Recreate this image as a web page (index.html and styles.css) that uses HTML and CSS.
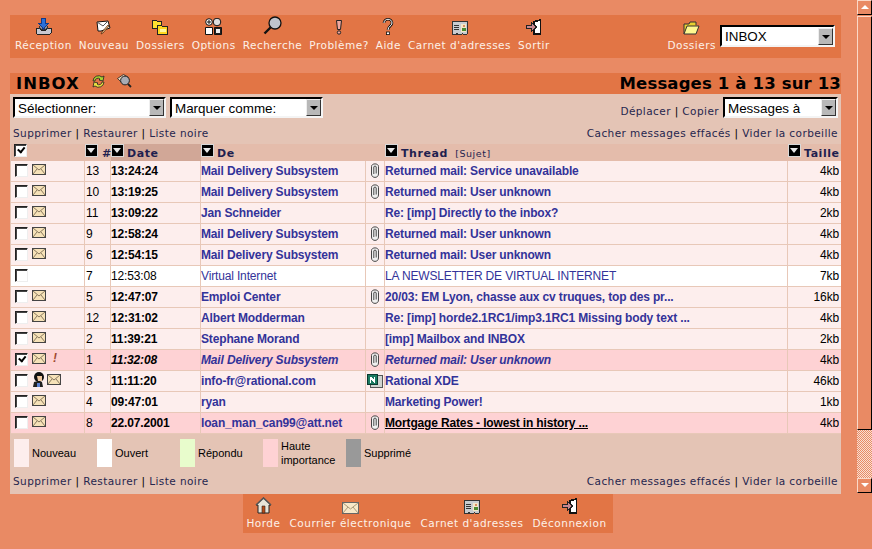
FILE: index.html
```html
<!DOCTYPE html>
<html lang="fr">
<head>
    <meta charset="UTF-8">
    <title>INBOX</title>
    <link rel="stylesheet" href="styles.css">
</head>
<body>
    <svg class="sprites" width="0" height="0">
        <symbol id="i-inbox" viewBox="0 0 17 17" shape-rendering="crispEdges">
            <path d="M1 10h3l2 2h5l2-2h3v5l-1 1H2l-1-1z" fill="#c8c8d0" stroke="#222"/>
            <path d="M4 10l2-4h5l2 4-2 1H6z" fill="#8a8a98" stroke="#333"/>
            <path d="M6.500 0h4v5h3l-5 6-5-6h3z" fill="#2a6fd8" stroke="#123a88"/>
        </symbol>
        <symbol id="i-new" viewBox="0 0 15 15">
            <path d="M1 2l11-1 2 7-9 3H2z" fill="#fff" stroke="#111"/>
            <path d="M1 2l6 4 5-5" fill="none" stroke="#555"/>
            <path d="M13 6l-6 7-2 1 1-2 6-7z" fill="#f0c890" stroke="#5a3010" stroke-width=".8"/>
        </symbol>
        <symbol id="i-folders" viewBox="0 0 16 15" shape-rendering="crispEdges">
            <path d="M.5.500h4l1 1h4v7h-9z" fill="#ffe030" stroke="#222"/>
            <path d="M5.500 5.500h4l1 1h5v8h-10z" fill="#ffd820" stroke="#222"/>
            <path d="M8 9h6v3H8z" fill="#fff6a0"/>
        </symbol>
        <symbol id="i-options" viewBox="0 0 17 17">
            <circle cx="4" cy="4" r="3.300" fill="#fff" stroke="#111"/>
            <path d="M2 4h4M4 2v4" stroke="#111"/>
            <circle cx="12" cy="4" r="3.800" fill="#ddd" stroke="#111"/>
            <path d="M.5 9.500h7v7h-7z" fill="#fff" stroke="#111"/>
            <path d="M9.500 9.500h7v7h-7z" fill="#222" stroke="#111"/>
            <path d="M11 11h4v4h-4z" fill="#eee"/>
        </symbol>
        <symbol id="i-search" viewBox="0 0 19 19">
            <circle cx="12" cy="7" r="6" fill="#c0c4cc" stroke="#111" stroke-width="1.300"/>
            <path d="M7.500 11.500L1.500 17.500" stroke="#111" stroke-width="2.400"/>
        </symbol>
        <symbol id="i-problem" viewBox="0 0 8 16">
            <path d="M1.500 1.500h5l-1 9h-3z" fill="#f0a8a0" stroke="#222"/>
            <circle cx="4" cy="13.500" r="1.700" fill="#f0a8a0" stroke="#222"/>
        </symbol>
        <symbol id="i-help" viewBox="0 0 12 17">
            <path d="M2 5c0-5 8-5 8 0 0 3-4 3-4 7" fill="none" stroke="#111" stroke-width="2.600"/>
            <path d="M2 5c0-5 8-5 8 0 0 3-4 3-4 7" fill="none" stroke="#fff" stroke-width="1"/>
            <rect x="4.500" y="14" width="3" height="2.600" fill="#fff" stroke="#111" stroke-width=".8"/>
        </symbol>
        <symbol id="i-book" viewBox="0 0 16 14" shape-rendering="crispEdges">
            <path d="M.5.500h15v12l-1 1h-3l-1-1-1 1H6l-1-1-1 1H1z" fill="#c8ccd0" stroke="#333"/>
            <path d="M2 4h5v1H2zM2 6h5v1H2zM2 8h5v1H2z" fill="#333"/>
            <path d="M9 3h5v8H9z" fill="#f4e8c8"/>
            <path d="M11 4h2v2h-2z" fill="#d89060"/>
            <path d="M10 7h4v3h-4z" fill="#4a8a30"/>
        </symbol>
        <symbol id="i-exit" viewBox="0 0 16 16" shape-rendering="crispEdges">
            <path d="M7 2l8-2v16H7z" fill="#111"/>
            <path d="M9 3l5-1v12H9z" fill="#fff"/>
            <path d="M.5 6.500h5v-3l5 4.500-5 4.500v-3h-5z" fill="#c88890" stroke="#222"/>
        </symbol>
        <symbol id="i-folder-open" viewBox="0 0 17 14">
            <path d="M1 13V3h5l1-2h6v3" fill="#e8d030" stroke="#333"/>
            <path d="M1 13l3-8h12l-3 8z" fill="#fff890" stroke="#333"/>
        </symbol>
        <symbol id="i-refresh" viewBox="0 0 15 15">
            <path d="M2 7a5.500 5.500 0 0 1 9-4l2-1-1 5-4-1 1-1a3 3 0 0 0-5 2z" fill="#a8d030" stroke="#222" stroke-width=".8"/>
            <path d="M13 8a5.500 5.500 0 0 1-9 4l-2 1 1-5 4 1-1 1a3 3 0 0 0 5-2z" fill="#e8e040" stroke="#222" stroke-width=".8"/>
        </symbol>
        <symbol id="i-find" viewBox="0 0 15 14">
            <path d="M.5 4.500l6-4 5 3-6 6z" fill="#ecd8bc" stroke="#222" stroke-width=".8"/>
            <circle cx="8" cy="6.500" r="4.400" fill="#a8acb4" stroke="#222"/>
            <path d="M11 10l3 3" stroke="#222" stroke-width="1.800"/>
        </symbol>
        <symbol id="i-mail" viewBox="0 0 14 11" shape-rendering="crispEdges">
            <path d="M1 .5h12l.5.500v9l-.5.500H1l-.5-.5V1z" fill="#f6e2b8" stroke="#444"/>
            <path d="M1 1l6 5 6-5M1 10l4-5M13 10L9 5" fill="none" stroke="#8a7a60" shape-rendering="auto"/>
        </symbol>
        <symbol id="i-clip" viewBox="0 0 10 15">
            <path d="M1.500 3.500C1.500 0 8.500 0 8.500 3.500v7.500c0 4.500-7 4.500-7 0z" fill="#f0f0f0" stroke="#333" stroke-width=".9"/>
            <path d="M3.800 11V4C3.800 2.800 6.200 2.800 6.200 4v6.500" fill="none" stroke="#333" stroke-width=".9"/>
        </symbol>
        <symbol id="i-person" viewBox="0 0 13 15">
            <path d="M1 15l1-5 4-1 4 1 1 5z" fill="#202020"/>
            <circle cx="7" cy="5" r="5" fill="#111"/>
            <path d="M5 4h5v5H6z" fill="#f0c8a0"/>
            <path d="M5 11h3v4H5z" fill="#5a80d0"/>
        </symbol>
        <symbol id="i-notes" viewBox="0 0 16 15" shape-rendering="crispEdges">
            <path d="M3.500 2.500h12v12h-12z" fill="#d0d4d0" stroke="#555"/>
            <path d="M.5 1.500h10v10H.5z" fill="#1a7a60" stroke="#0a3a30"/>
            <path d="M3 4h1l3 3V4h1v6H7L4 7v3H3z" fill="#fff"/>
        </symbol>
        <symbol id="i-home" viewBox="0 0 17 17">
            <path d="M8.500 1L1 8h2v8h11V8h2z" fill="#e8e4d8" stroke="#222"/>
            <path d="M1 8l7.500-7L16 8" fill="none" stroke="#555" stroke-width="1.600"/>
            <path d="M7 9h3v7H7z" fill="#b84a18" stroke="#222" stroke-width=".6"/>
        </symbol>
        <symbol id="i-bigmail" viewBox="0 0 17 12" shape-rendering="crispEdges">
            <path d="M.5.500h16v11H.5z" fill="#f8e8c8" stroke="#666"/>
            <path d="M1 1l7.500 6L16 1M1 11l5-6M16 11l-5-6" fill="none" stroke="#a89878" shape-rendering="auto"/>
        </symbol>
    </svg>

    <main class="page">
        <nav class="toolbar">
            <a class="tool"><svg class="icon" width="17" height="17"><use href="#i-inbox"/></svg>Réception</a>
            <a class="tool"><svg class="icon" width="15" height="15"><use href="#i-new"/></svg>Nouveau</a>
            <a class="tool"><svg class="icon" width="16" height="15"><use href="#i-folders"/></svg>Dossiers</a>
            <a class="tool"><svg class="icon" width="17" height="17"><use href="#i-options"/></svg>Options</a>
            <a class="tool"><svg class="icon" width="19" height="19"><use href="#i-search"/></svg>Recherche</a>
            <a class="tool"><svg class="icon" width="8" height="16"><use href="#i-problem"/></svg>Problème?</a>
            <a class="tool"><svg class="icon" width="12" height="17"><use href="#i-help"/></svg>Aide</a>
            <a class="tool"><svg class="icon" width="16" height="14"><use href="#i-book"/></svg>Carnet d'adresses</a>
            <a class="tool"><svg class="icon" width="16" height="16"><use href="#i-exit"/></svg>Sortir</a>
            <div class="folder-pick">
                <a class="tool"><svg class="icon" width="17" height="14"><use href="#i-folder-open"/></svg>Dossiers</a>
                <div class="combo combo-folder"><span>INBOX</span><i class="combo-btn"></i></div>
            </div>
        </nav>

        <header class="titlebar">
            <div class="title-left">
                <h1>INBOX</h1>
                <svg class="title-icon" width="15" height="15"><use href="#i-refresh"/></svg>
                <svg class="title-icon" width="15" height="14"><use href="#i-find"/></svg>
            </div>
            <div class="title-count">Messages 1 à 13 sur 13</div>
        </header>

        <section class="panel">
            <div class="controls">
                <div class="combo"><span>Sélectionner:</span><i class="combo-btn"></i></div>
                <div class="combo"><span>Marquer comme:</span><i class="combo-btn"></i></div>
                <div class="move">
                    <span class="links"><a>Déplacer</a> | <a>Copier</a></span>
                    <div class="combo combo-move"><span>Messages à</span><i class="combo-btn"></i></div>
                </div>
            </div>
            <div class="linkrow">
                <span class="links"><a>Supprimer</a> | <a>Restaurer</a> | <a>Liste noire</a></span>
                <span class="links"><a>Cacher messages effacés</a> | <a>Vider la corbeille</a></span>
            </div>

            <table class="messages">
                <colgroup>
                    <col class="c-flags"><col class="c-num"><col class="c-date"><col class="c-from"><col class="c-att"><col class="c-subj"><col class="c-size">
                </colgroup>
                <thead>
                    <tr>
                        <th class="th-check"><b class="check on"></b></th>
                        <th><b class="sort"></b><span class="hash">#</span></th>
                        <th class="sorted"><b class="sort"></b>Date</th>
                        <th><b class="sort"></b>De</th>
                        <th></th>
                        <th><b class="sort"></b>Thread <small>[Sujet]</small></th>
                        <th><b class="sort"></b>Taille</th>
                    </tr>
                </thead>
                <tbody>
                    <tr class="unread">
                        <td><div class="flags"><b class="check"></b><svg width="14" height="11"><use href="#i-mail"/></svg></div></td>
                        <td>13</td><td class="date">13:24:24</td><td><a>Mail Delivery Subsystem</a></td>
                        <td class="att"><svg width="10" height="15"><use href="#i-clip"/></svg></td>
                        <td><a>Returned mail: Service unavailable</a></td><td class="size">4kb</td>
                    </tr>
                    <tr class="unread">
                        <td><div class="flags"><b class="check"></b><svg width="14" height="11"><use href="#i-mail"/></svg></div></td>
                        <td>10</td><td class="date">13:19:25</td><td><a>Mail Delivery Subsystem</a></td>
                        <td class="att"><svg width="10" height="15"><use href="#i-clip"/></svg></td>
                        <td><a>Returned mail: User unknown</a></td><td class="size">4kb</td>
                    </tr>
                    <tr class="unread">
                        <td><div class="flags"><b class="check"></b><svg width="14" height="11"><use href="#i-mail"/></svg></div></td>
                        <td>11</td><td class="date">13:09:22</td><td><a>Jan Schneider</a></td>
                        <td class="att"></td>
                        <td><a>Re: [imp] Directly to the inbox?</a></td><td class="size">2kb</td>
                    </tr>
                    <tr class="unread">
                        <td><div class="flags"><b class="check"></b><svg width="14" height="11"><use href="#i-mail"/></svg></div></td>
                        <td>9</td><td class="date">12:58:24</td><td><a>Mail Delivery Subsystem</a></td>
                        <td class="att"><svg width="10" height="15"><use href="#i-clip"/></svg></td>
                        <td><a>Returned mail: User unknown</a></td><td class="size">4kb</td>
                    </tr>
                    <tr class="unread">
                        <td><div class="flags"><b class="check"></b><svg width="14" height="11"><use href="#i-mail"/></svg></div></td>
                        <td>6</td><td class="date">12:54:15</td><td><a>Mail Delivery Subsystem</a></td>
                        <td class="att"><svg width="10" height="15"><use href="#i-clip"/></svg></td>
                        <td><a>Returned mail: User unknown</a></td><td class="size">4kb</td>
                    </tr>
                    <tr class="opened">
                        <td><div class="flags"><b class="check"></b></div></td>
                        <td>7</td><td class="date">12:53:08</td><td><a>Virtual Internet</a></td>
                        <td class="att"></td>
                        <td><a>LA NEWSLETTER DE VIRTUAL INTERNET</a></td><td class="size">7kb</td>
                    </tr>
                    <tr class="unread">
                        <td><div class="flags"><b class="check"></b><svg width="14" height="11"><use href="#i-mail"/></svg></div></td>
                        <td>5</td><td class="date">12:47:07</td><td><a>Emploi Center</a></td>
                        <td class="att"><svg width="10" height="15"><use href="#i-clip"/></svg></td>
                        <td><a>20/03: EM Lyon, chasse aux cv truques, top des pr...</a></td><td class="size">16kb</td>
                    </tr>
                    <tr class="unread">
                        <td><div class="flags"><b class="check"></b><svg width="14" height="11"><use href="#i-mail"/></svg></div></td>
                        <td>12</td><td class="date">12:31:02</td><td><a>Albert Modderman</a></td>
                        <td class="att"></td>
                        <td><a>Re: [imp] horde2.1RC1/imp3.1RC1 Missing body text ...</a></td><td class="size">4kb</td>
                    </tr>
                    <tr class="unread">
                        <td><div class="flags"><b class="check"></b><svg width="14" height="11"><use href="#i-mail"/></svg></div></td>
                        <td>2</td><td class="date">11:39:21</td><td><a>Stephane Morand</a></td>
                        <td class="att"></td>
                        <td><a>[imp] Mailbox and INBOX</a></td><td class="size">2kb</td>
                    </tr>
                    <tr class="important selected">
                        <td><div class="flags"><b class="check on"></b><svg width="14" height="11"><use href="#i-mail"/></svg><em class="prio">!</em></div></td>
                        <td>1</td><td class="date">11:32:08</td><td><a>Mail Delivery Subsystem</a></td>
                        <td class="att"><svg width="10" height="15"><use href="#i-clip"/></svg></td>
                        <td><a>Returned mail: User unknown</a></td><td class="size">4kb</td>
                    </tr>
                    <tr class="unread">
                        <td><div class="flags flags-tight"><b class="check"></b><svg width="13" height="15"><use href="#i-person"/></svg><svg width="14" height="11"><use href="#i-mail"/></svg></div></td>
                        <td>3</td><td class="date">11:11:20</td><td><a>info-fr@rational.com</a></td>
                        <td class="att"><svg width="16" height="15"><use href="#i-notes"/></svg></td>
                        <td><a>Rational XDE</a></td><td class="size">46kb</td>
                    </tr>
                    <tr class="unread">
                        <td><div class="flags"><b class="check"></b><svg width="14" height="11"><use href="#i-mail"/></svg></div></td>
                        <td>4</td><td class="date">09:47:01</td><td><a>ryan</a></td>
                        <td class="att"></td>
                        <td><a>Marketing Power!</a></td><td class="size">1kb</td>
                    </tr>
                    <tr class="important">
                        <td><div class="flags"><b class="check"></b><svg width="14" height="11"><use href="#i-mail"/></svg></div></td>
                        <td>8</td><td class="date">22.07.2001</td><td><a>loan_man_can99@att.net</a></td>
                        <td class="att"><svg width="10" height="15"><use href="#i-clip"/></svg></td>
                        <td><a class="spam">Mortgage Rates - lowest in history ...</a></td><td class="size">4kb</td>
                    </tr>
                </tbody>
            </table>

            <div class="legend">
                <div class="legend-item"><i class="swatch sw-new"></i>Nouveau</div>
                <div class="legend-item"><i class="swatch sw-open"></i>Ouvert</div>
                <div class="legend-item"><i class="swatch sw-reply"></i>Répondu</div>
                <div class="legend-item"><i class="swatch sw-high"></i>Haute<br>importance</div>
                <div class="legend-item"><i class="swatch sw-del"></i>Supprimé</div>
            </div>

            <div class="linkrow linkrow-bottom">
                <span class="links"><a>Supprimer</a> | <a>Restaurer</a> | <a>Liste noire</a></span>
                <span class="links"><a>Cacher messages effacés</a> | <a>Vider la corbeille</a></span>
            </div>
        </section>

        <nav class="bottombar">
            <a class="tool"><svg class="icon" width="17" height="17"><use href="#i-home"/></svg>Horde</a>
            <a class="tool"><svg class="icon" width="17" height="12"><use href="#i-bigmail"/></svg>Courrier électronique</a>
            <a class="tool"><svg class="icon" width="16" height="14"><use href="#i-book"/></svg>Carnet d'adresses</a>
            <a class="tool"><svg class="icon" width="16" height="16"><use href="#i-exit"/></svg>Déconnexion</a>
        </nav>
    </main>

    <aside class="scrollbar">
        <div class="sb-arrow sb-up"></div>
        <div class="sb-thumb"></div>
        <div class="sb-track"></div>
        <div class="sb-arrow sb-down"></div>
    </aside>
</body>
</html>
```

FILE: styles.css
```css
html, body {
    height: 100%;
}
body {
    margin: 0;
    display: flex;
    align-items: flex-start;
    background-color: #e98a64;
    font-family: "DejaVu Sans", Verdana, sans-serif;
    font-size: 11px;
    overflow: hidden;
}
.sprites {
    position: absolute;
}
.page {
    width: 856px;
    flex: none;
    box-sizing: border-box;
    padding: 15px 15px 0 10px;
    display: flex;
    flex-direction: column;
}

/* toolbars */
.toolbar {
    height: 43px;
    background-color: #e27545;
    display: flex;
    gap: 7px;
    padding: 0 6px 0 5px;
}
.tool {
    display: flex;
    flex-direction: column;
    align-items: center;
    justify-content: flex-end;
    height: 37px;
    color: #fdf1e8;
    font-size: 10.5px;
    letter-spacing: .5px;
    line-height: 14px;
    white-space: nowrap;
}
.icon {
    margin-bottom: 3px;
}
.folder-pick {
    margin-left: auto;
    display: flex;
    align-items: flex-start;
    gap: 4px;
}
.bottombar {
    align-self: center;
    position: relative;
    left: 2.5px;
    height: 39px;
    background-color: #e27545;
    display: flex;
    gap: 9px;
    padding: 0 6px 0 3px;
}
.bottombar .tool {
    height: 36px;
}
.bottombar .icon {
    margin-bottom: 2px;
}

/* title */
.titlebar {
    margin-top: 15px;
    height: 21px;
    background-color: #e27545;
    display: flex;
    align-items: center;
    justify-content: space-between;
    color: #000;
    font-weight: bold;
    font-size: 16.5px;
    letter-spacing: .15px;
}
.title-left {
    display: flex;
    align-items: center;
    gap: 11px;
    padding-left: 6px;
}
.title-icon {
    margin-top: -5px;
}
h1 {
    margin: 0;
    font-size: 16.5px;
    letter-spacing: 1px;
}

/* panel */
.panel {
    background-color: #e4c4b5;
    height: 400px;
    display: flex;
    flex-direction: column;
}
.controls {
    display: flex;
    gap: 4px;
    padding: 3px 3px 0;
    height: 24px;
}
.move {
    margin-left: auto;
    display: flex;
    align-items: flex-start;
    gap: 4px;
}
.move .links {
    margin-top: 8px;
}
.combo {
    width: 153px;
    height: 21px;
    box-sizing: border-box;
    border: 2px solid #000;
    border-right-color: #f4f4f4;
    border-bottom-color: #f4f4f4;
    background-color: #fff;
    display: flex;
    align-items: center;
    justify-content: space-between;
    font-family: "Liberation Sans", Arial, sans-serif;
    font-size: 13.4px;
    color: #000;
    padding-left: 3px;
}
.combo span {
    padding-top: 1px;
}
.combo-folder {
    width: 115px;
    height: 22px;
    margin-top: 10px;
}
.combo-move {
    width: 115px;
}
.combo-btn {
    width: 15px;
    height: 17px;
    box-sizing: border-box;
    background-color: #b8b8b8;
    border: 1px solid;
    border-color: #eee #333 #333 #eee;
    position: relative;
    flex: none;
}
.combo-btn::after {
    content: "";
    position: absolute;
    left: 3px;
    top: 6px;
    border: 4px solid transparent;
    border-top: 4px solid #000;
    border-bottom: 0;
}
.links {
    color: #000;
    font-size: 10.5px;
    letter-spacing: .42px;
    white-space: nowrap;
}
.links a {
    color: #26264e;
}
.linkrow {
    display: flex;
    justify-content: space-between;
    box-sizing: border-box;
    padding: 2px 3px 0;
    height: 26px;
    align-items: center;
    margin-top: 2px;
}
.linkrow-bottom {
    padding-top: 0;
    height: 28px;
}

/* message list */
.messages {
    width: 830px;
    margin-left: 1px;
    table-layout: fixed;
    border-collapse: separate;
    border-spacing: 0;
    font-family: "Liberation Sans", Arial, sans-serif;
    font-size: 12px;
    letter-spacing: -.15px;
}
.c-flags { width: 74px; }
.c-num { width: 26px; }
.c-date { width: 90px; }
.c-from { width: 165px; }
.c-att { width: 19px; }
.c-subj { width: 403px; }
.c-size { width: 53px; }
.messages th {
    height: 15px;
    padding: 2px 0 0;
    background-color: #e4bcab;
    text-align: left;
    vertical-align: top;
    font-family: "DejaVu Sans", Verdana, sans-serif;
    font-size: 11px;
    letter-spacing: .55px;
    line-height: 15px;
    color: #1f1f4f;
    white-space: nowrap;
}
.messages th.sorted {
    background-color: #d1a797;
}
.messages th small {
    font-weight: normal;
    font-size: 9.5px;
    margin-left: 3px;
}
.messages .th-check {
    padding-left: 3px;
}
.th-check .check {
    margin-top: -2px;
}
.sort {
    display: inline-block;
    box-sizing: border-box;
    width: 13px;
    height: 13px;
    margin: -2px 3px 0 0;
    background-color: #000;
    border: 1px solid #d8d8d8;
    vertical-align: top;
    position: relative;
}
.sort::after {
    content: "";
    position: absolute;
    left: 1px;
    top: 3px;
    border: 4.5px solid transparent;
    border-top: 5px solid #e8e8e8;
    border-bottom: 0;
}
.hash {
    margin-left: 1px;
}
.messages td {
    height: 20px;
    padding: 0;
    border-right: 1px solid #e8c8b8;
    border-bottom: 1px solid #e8c8b8;
    color: #000;
    white-space: nowrap;
    overflow: hidden;
}
.messages td:nth-child(2) {
    padding-left: 1px;
}
.messages td:last-child {
    border-right: 0;
}
.messages td a {
    color: #333399;
}
.unread td {
    background-color: #fdeeed;
    font-weight: normal;
}
.unread .date, .unread a, .important .date, .important a {
    font-weight: bold;
}
.opened td {
    background-color: #fff;
}
.important td {
    background-color: #fed2d4;
}
.selected .date, .selected a {
    font-style: italic;
}
.messages a.spam {
    color: #000;
    text-decoration: underline;
}
.size {
    text-align: right;
    padding-right: 2px !important;
}
.att {
    text-align: center;
    line-height: 0;
}
.att svg {
    vertical-align: middle;
}
.flags {
    display: flex;
    align-items: center;
    gap: 4px;
    padding-left: 4px;
    height: 20px;
}
.flags-tight {
    gap: 2px;
}
.flags-tight svg:nth-of-type(1) {
    margin-left: 2px;
}
.flags svg {
    margin-top: -3px;
}
.check {
    display: block;
    box-sizing: border-box;
    width: 13px;
    height: 13px;
    background-color: #fff;
    border: 1px solid;
    border-color: #222 #eee #eee #222;
    box-shadow: inset 1px 1px 0 #444;
    position: relative;
    flex: none;
}
.check.on::after {
    content: "";
    position: absolute;
    left: 2px;
    top: 1px;
    width: 5px;
    height: 3px;
    border-left: 2px solid #000;
    border-bottom: 2px solid #000;
    transform: rotate(-50deg) translate(0, 1px);
}
.prio {
    color: #a04a30;
    font-weight: bold;
    margin: -4px 0 0 3px;
}

/* legend */
.legend {
    display: flex;
    margin: 5px 0 0 4px;
    font-family: "Liberation Sans", Arial, sans-serif;
    font-size: 11px;
    line-height: 14px;
    color: #000;
}
.legend-item {
    width: 83px;
    height: 28px;
    display: flex;
    align-items: center;
}
.swatch {
    width: 15px;
    height: 28px;
    margin-right: 3px;
    flex: none;
}
.sw-new { background-color: #fdeeed; }
.sw-open { background-color: #fff; }
.sw-reply { background-color: #e8fccc; }
.sw-high { background-color: #fed2d4; }
.sw-del { background-color: #999; }

/* scrollbar */
.scrollbar {
    width: 15px;
    margin-left: 1px;
    height: 493px;
    display: flex;
    flex-direction: column;
}
.sb-arrow {
    height: 15px;
    box-sizing: border-box;
    background-color: #e98a64;
    border: 1px solid;
    border-color: #fbd8c8 #000 #000 #fbd8c8;
    position: relative;
    flex: none;
}
.sb-arrow::after {
    content: "";
    position: absolute;
    left: 3px;
    top: 4px;
    border: 4px solid transparent;
}
.sb-up::after {
    border-bottom: 4px solid #fff;
    border-top: 0;
}
.sb-down::after {
    border-top: 4px solid #fff;
    border-bottom: 0;
}
.sb-thumb {
    flex: 1;
    background-color: #e98a64;
    box-sizing: border-box;
    border: 1px solid;
    border-color: #fbd8c8 #000 #000 #fbd8c8;
    margin-top: 1px;
}
.sb-track {
    height: 48px;
    flex: none;
    background-color: #f0b8a0;
    background-image: repeating-conic-gradient(#e98a64 0 25%, #f7e0d4 0 50%);
    background-size: 2px 2px;
}
```
